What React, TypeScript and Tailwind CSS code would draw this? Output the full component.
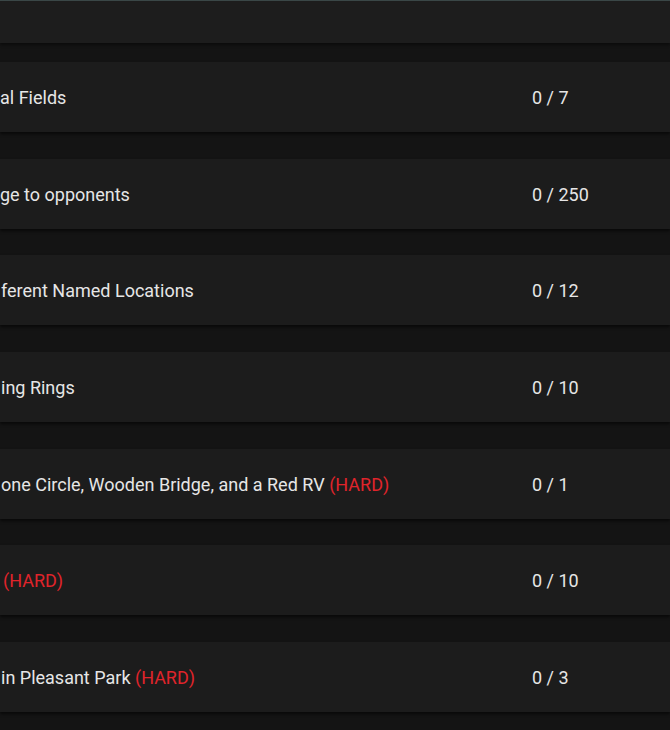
const challenges = [
  { text: 'al Fields', hard: false, progress: '0 / 7', indent: 'pl-0' },
  { text: 'ge to opponents', hard: false, progress: '0 / 250', indent: 'pl-0' },
  { text: 'ferent Named Locations', hard: false, progress: '0 / 12', indent: 'pl-px' },
  { text: 'ing Rings', hard: false, progress: '0 / 10', indent: 'pl-px' },
  { text: 'one Circle, Wooden Bridge, and a Red RV', hard: true, progress: '0 / 1', indent: 'pl-px' },
  { text: '', hard: true, progress: '0 / 10', indent: 'pl-[3px]' },
  { text: 'in Pleasant Park', hard: true, progress: '0 / 3', indent: 'pl-px' },
];

export default function App() {
  return (
    <div className="w-[670px] h-[730px] overflow-hidden bg-[#141414] font-['Roboto',sans-serif] text-[18px] text-[#e6e6e6]">
      <div className="h-[43px] bg-[#1d1d1d] border-t border-[#3a4747] shadow-[0_2px_3px_rgba(0,0,0,0.45)]" />
      <div className="flex flex-col gap-[26.67px] pt-[19px]">
        {challenges.map((c, i) => (
          <div
            key={i}
            className="flex h-[70px] shrink-0 items-center pt-px bg-[#1c1c1c] shadow-[0_2px_3px_rgba(0,0,0,0.6)]"
          >
            <div className={`flex-1 whitespace-nowrap ${c.indent}`}>
              {c.text}
              {c.hard && (
                <span className="text-[#e0242b]">
                  {c.text ? ' ' : ''}(HARD)
                </span>
              )}
            </div>
            <div className="w-[138px] whitespace-nowrap">{c.progress}</div>
          </div>
        ))}
      </div>
    </div>
  );
}
